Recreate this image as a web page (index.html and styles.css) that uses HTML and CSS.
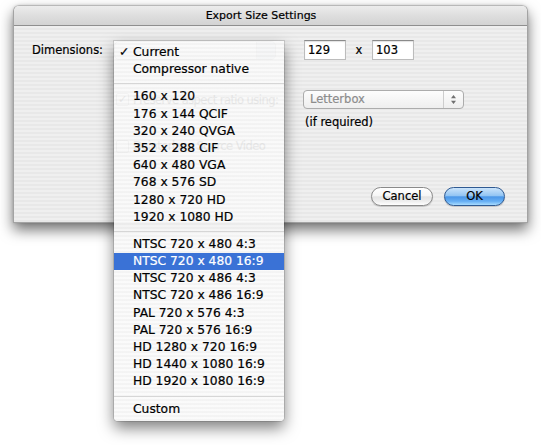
FILE: index.html
```html
<!DOCTYPE html>
<html lang="en">
<head>
<meta charset="utf-8">
<title>Export Size Settings</title>
<link rel="stylesheet" href="styles.css">
</head>
<body>
<div class="stage">
  <div class="window">
    <div class="titlebar">Export Size Settings</div>
    <div class="content">
      <div class="row row-dims">
        <div class="label">Dimensions:</div>
        <div class="popup popup-dims"><span class="popup-cap"></span></div>
        <div class="field">129</div>
        <span class="times">x</span>
        <div class="field">103</div>
      </div>
      <div class="row row-aspect">
        <div class="check-group">
          <span class="checkbox">&#10003;</span>
          <span class="ghost-label">Preserve aspect ratio using:</span>
        </div>
        <div class="aspect-col">
          <div class="popup popup-disabled">
            <span class="popup-text">Letterbox</span>
            <span class="popup-arrows">
              <svg width="7" height="11" viewBox="0 0 7 11"><path d="M3.5 1 L6 4.2 H1 Z M3.5 10 L6 6.8 H1 Z" fill="#707070"/></svg>
            </span>
          </div>
          <div class="note">(if required)</div>
        </div>
      </div>
      <div class="row row-deint">
        <span class="checkbox"></span>
        <span class="ghost-label">Deinterlace Source Video</span>
      </div>
      <div class="row row-buttons">
        <button class="btn btn-cancel">Cancel</button>
        <button class="btn btn-ok">OK</button>
      </div>
    </div>
  </div>

  <div class="menu">
    <div class="item checked"><span class="mark">&#10003;</span>Current</div>
    <div class="item">Compressor native</div>
    <div class="sep"></div>
    <div class="item">160 x 120</div>
    <div class="item">176 x 144 QCIF</div>
    <div class="item">320 x 240 QVGA</div>
    <div class="item">352 x 288 CIF</div>
    <div class="item">640 x 480 VGA</div>
    <div class="item">768 x 576 SD</div>
    <div class="item">1280 x 720 HD</div>
    <div class="item">1920 x 1080 HD</div>
    <div class="sep"></div>
    <div class="item">NTSC 720 x 480 4:3</div>
    <div class="item selected">NTSC 720 x 480 16:9</div>
    <div class="item">NTSC 720 x 486 4:3</div>
    <div class="item">NTSC 720 x 486 16:9</div>
    <div class="item">PAL 720 x 576 4:3</div>
    <div class="item">PAL 720 x 576 16:9</div>
    <div class="item">HD 1280 x 720 16:9</div>
    <div class="item">HD 1440 x 1080 16:9</div>
    <div class="item">HD 1920 x 1080 16:9</div>
    <div class="sep"></div>
    <div class="item">Custom</div>
  </div>
</div>
</body>
</html>
```

FILE: styles.css
```css
html, body {
  margin: 0;
  padding: 0;
  background: #ffffff;
}

body {
  width: 541px;
  height: 445px;
  overflow: hidden;
  font-family: "DejaVu Sans", "Liberation Sans", sans-serif;
  color: #000;
  -webkit-text-stroke: 0.2px currentColor;
}

.stage {
  position: relative;
  width: 541px;
  height: 445px;
  padding-top: 5px;
  box-sizing: border-box;
}

/* ---------- window ---------- */
.window {
  margin-left: 13px;
  width: 515px;
  box-sizing: border-box;
  border: 1px solid #a3a3a3;
  border-top-color: #b8b8b8;
  border-radius: 6px 6px 0 0;
  background: repeating-linear-gradient(to bottom, #efefef 0, #efefef 2px, #e8e8e8 2px, #e8e8e8 4px);
  box-shadow: 0 7px 14px rgba(0, 0, 0, 0.55), 0 0 3px rgba(0, 0, 0, 0.15);
}

.titlebar {
  height: 19px;
  line-height: 19px;
  font-size: 11px;
  text-align: center;
  padding-right: 19px;
  border-radius: 5px 5px 0 0;
  background: linear-gradient(to bottom, #ececec 0%, #dedede 50%, #d3d3d3 100%);
  border-bottom: 1px solid #8f8f8f;
}

.content {
  padding: 14px 22px 16px 18px;
  display: flex;
  flex-direction: column;
  font-size: 11.5px;
}

.row {
  display: flex;
}

/* row 1 */
.row-dims {
  align-items: center;
  height: 20px;
}

.label {
  width: 82px;
}

.popup-dims {
  width: 162px;
  height: 19px;
  box-sizing: border-box;
  border: 1px solid #9b9b9b;
  border-radius: 5px;
  background: linear-gradient(to bottom, #ffffff, #e6e6e6);
  display: flex;
  justify-content: flex-end;
  overflow: hidden;
}

.popup-cap {
  width: 18px;
  border-left: 1px solid #b0b0b0;
  background: linear-gradient(to bottom, #d6dde6, #aeb9c6);
}

.field {
  width: 42px;
  height: 20px;
  box-sizing: border-box;
  background: #ffffff;
  border: 1px solid #bcbcbc;
  border-top-color: #8a8a8a;
  box-shadow: inset 0 1px 1px rgba(0, 0, 0, 0.12);
  padding-left: 3px;
  line-height: 18px;
}

.row-dims .popup-dims + .field {
  margin-left: 28px;
}

.times {
  width: 26px;
  text-align: center;
}

/* row 2 */
.row-aspect {
  margin-top: 30px;
  align-items: flex-start;
}

.check-group {
  width: 254px;
  height: 19px;
  display: flex;
  align-items: center;
  padding-left: 84px;
  box-sizing: border-box;
  white-space: nowrap;
}

.checkbox {
  width: 13px;
  height: 13px;
  flex: none;
  box-sizing: border-box;
  border: 1px solid #8a8a8a;
  border-radius: 2px;
  background: linear-gradient(to bottom, #ffffff, #e4e4e4);
  font-size: 11px;
  line-height: 11px;
  text-align: center;
  margin-right: 4px;
}

.ghost-label {
  letter-spacing: -0.55px;
}

.aspect-col {
  margin-left: 17px;
  display: flex;
  flex-direction: column;
}

.popup-disabled {
  width: 161px;
  height: 19px;
  box-sizing: border-box;
  border: 1px solid #acacac;
  border-radius: 4px;
  background: linear-gradient(to bottom, #fdfdfd, #eeeeee);
  display: flex;
  align-items: stretch;
}

.popup-text {
  flex: 1;
  color: #8c8c8c;
  padding-left: 6px;
  line-height: 17px;
}

.popup-arrows {
  width: 19px;
  border-left: 1px solid #cdcdcd;
  display: flex;
  align-items: center;
  justify-content: center;
}

.note {
  margin-top: 6px;
  margin-left: 2px;
  line-height: 15px;
}

/* row 3 */
.row-deint {
  margin-top: 9px;
  align-items: center;
  padding-left: 84px;
  height: 14px;
}

/* buttons */
.row-buttons {
  margin-top: 34px;
  justify-content: flex-end;
  gap: 11px;
}

.btn {
  height: 19px;
  padding: 0;
  border-radius: 10px;
  font-family: inherit;
  font-size: 11.5px;
  line-height: 17px;
  color: #000;
  -webkit-text-stroke: 0.2px currentColor;
  box-shadow: 0 1px 1px rgba(0, 0, 0, 0.18);
}

.btn-cancel {
  width: 62px;
  border: 1px solid #8a8a8a;
  background: linear-gradient(to bottom, #ffffff 0%, #f6f6f6 45%, #e3e3e3 52%, #efefef 80%, #ffffff 100%);
}

.btn-ok {
  width: 61px;
  border: 1px solid #2f5a92;
  background: linear-gradient(to bottom, #cbe4fb 0%, #93c5f3 45%, #4b97e8 52%, #66aef3 78%, #a8dcff 100%);
}

/* ---------- pop-up menu ---------- */
.menu {
  position: absolute;
  left: 114px;
  top: 41px;
  width: 170px;
  padding: 3px 0;
  font-size: 12.3px;
  background: repeating-linear-gradient(to bottom, rgba(250, 250, 250, 0.93) 0, rgba(250, 250, 250, 0.93) 2px, rgba(243, 243, 243, 0.93) 2px, rgba(243, 243, 243, 0.93) 4px);
  box-shadow: 0 7px 15px rgba(0, 0, 0, 0.5), 0 0 0 1px rgba(0, 0, 0, 0.12);
  border-radius: 0 0 4px 4px;
}

.item {
  height: 17.2px;
  line-height: 17.2px;
  padding-left: 19px;
  white-space: nowrap;
  display: flex;
}

.item.checked {
  padding-left: 5px;
}

.mark {
  width: 14px;
  flex: none;
}

.item.selected {
  background: #3a72d6;
  color: #ffffff;
}

.sep {
  height: 0;
  margin: 5px 0 4px;
  border-top: 1px solid #d6d6d6;
}
```
